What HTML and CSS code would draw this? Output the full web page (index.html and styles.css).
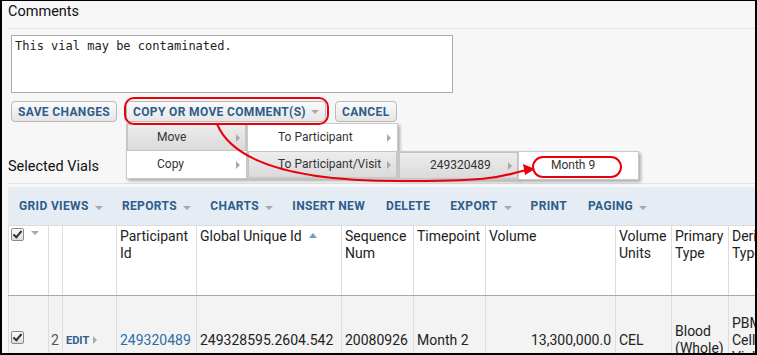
FILE: index.html
```html
<!DOCTYPE html>
<html lang="en">
<head>
    <meta charset="UTF-8">
    <title>Specimen comments</title>
    <link rel="stylesheet" href="styles.css">
</head>
<body>
<div class="frame">
    <div class="page">
        <h2 class="section-title">Comments</h2>
        <textarea class="comment-box">This vial may be contaminated.</textarea>
        <div class="button-row">
            <span class="btn">Save Changes</span>
            <span class="btn">Copy or Move Comment(s) <span class="caret"></span></span>
            <span class="btn">Cancel</span>
        </div>

        <h2 class="section-title vials-title">Selected Vials</h2>

        <div class="grid">
            <div class="toolbar">
                <span class="tb-item has-caret">Grid Views <span class="caret"></span></span>
                <span class="tb-item has-caret">Reports <span class="caret"></span></span>
                <span class="tb-item has-caret">Charts <span class="caret"></span></span>
                <span class="tb-item">Insert New</span>
                <span class="tb-item">Delete</span>
                <span class="tb-item has-caret">Export <span class="caret"></span></span>
                <span class="tb-item">Print</span>
                <span class="tb-item has-caret">Paging <span class="caret"></span></span>
            </div>
            <table class="data">
                <colgroup>
                    <col style="width:40px"><col style="width:14px"><col style="width:54px">
                    <col style="width:80px"><col style="width:145px"><col style="width:72px">
                    <col style="width:72px"><col style="width:130px"><col style="width:56px">
                    <col style="width:57px"><col style="width:52px">
                </colgroup>
                <tr class="head">
                    <th class="sel"><span class="check"></span><span class="caret grey"></span></th>
                    <th></th>
                    <th></th>
                    <th>Participant Id</th>
                    <th>Global Unique Id <span class="sort-up"></span></th>
                    <th>Sequence Num</th>
                    <th>Timepoint</th>
                    <th>Volume</th>
                    <th>Volume Units</th>
                    <th>Primary Type</th>
                    <th>Derivative Type</th>
                </tr>
                <tr class="row">
                    <td class="sel"><span class="check"></span></td>
                    <td class="rownum">2</td>
                    <td><span class="edit">Edit</span> <span class="tri grey"></span></td>
                    <td><a class="link">249320489</a></td>
                    <td>249328595.2604.542</td>
                    <td>20080926</td>
                    <td>Month 2</td>
                    <td class="num">13,300,000.0</td>
                    <td>CEL</td>
                    <td>Blood (Whole)</td>
                    <td>PBMC Cells Viable</td>
                </tr>
            </table>
        </div>
    </div>

    <div class="menu menu-1">
        <div class="menu-item active">Move <span class="tri"></span></div>
        <div class="menu-item">Copy <span class="tri"></span></div>
    </div>
    <div class="menu menu-2">
        <div class="menu-item">To Participant <span class="tri"></span></div>
        <div class="menu-item active">To Participant/Visit <span class="tri"></span></div>
    </div>
    <div class="menu menu-3">
        <div class="menu-item active">249320489 <span class="tri"></span></div>
    </div>
    <div class="menu menu-4">
        <div class="menu-item">Month 9</div>
    </div>

    <svg class="marks" width="757" height="355" viewBox="0 0 757 355">
        <rect x="125" y="98" width="203" height="26" rx="9" fill="none" stroke="#e8000b" stroke-width="2"/>
        <rect x="533" y="157" width="88" height="20" rx="10" fill="none" stroke="#e8000b" stroke-width="2"/>
        <path d="M217 124 C 232 160 290 181 400 181 S 500 175 527 170" fill="none" stroke="#e8000b" stroke-width="2"/>
        <polygon points="535,169 523,164 525,175" fill="#e8000b"/>
    </svg>
</div>
</body>
</html>
```

FILE: styles.css
```css
body {
    margin: 0;
    font-family: Roboto, "Liberation Sans", Arial, sans-serif;
    color: #222;
}

.frame {
    position: relative;
    width: 757px;
    height: 355px;
    box-sizing: border-box;
    border: 2px solid #000;
    border-top-width: 1px;
    background-color: #f7f7f7;
    overflow: hidden;
}

.page {
    padding-left: 6px;
}

.section-title {
    margin: 0;
    padding: 2px 0 7px;
    font-size: 14.5px;
    font-weight: normal;
    line-height: 18px;
    color: #111;
    border-bottom: 1px solid #e2e2e2;
}

.vials-title {
    margin-top: 34px;
}

.comment-box {
    display: block;
    box-sizing: border-box;
    width: 442px;
    height: 58px;
    margin: 6px 0 0 3px;
    padding: 3px 3px;
    font-family: "DejaVu Sans Mono", monospace;
    font-size: 12px;
    line-height: 15px;
    color: #222;
    background: #fff;
    border: 1px solid #a9a9a9;
    resize: none;
}

.button-row {
    display: flex;
    gap: 9px;
    margin: 8px 0 0 3px;
}

.btn {
    display: inline-flex;
    align-items: center;
    height: 21px;
    box-sizing: border-box;
    padding: 0 6px;
    font-size: 12px;
    font-weight: bold;
    letter-spacing: 0.35px;
    text-transform: uppercase;
    color: #2e5d8c;
    background: linear-gradient(#fafafa, #e6e6e6);
    border: 1px solid #b9b9b9;
    border-radius: 4px;
}

.caret {
    display: inline-block;
    width: 0;
    height: 0;
    margin-left: 5px;
    border-left: 4px solid transparent;
    border-right: 4px solid transparent;
    border-top: 4px solid #a8a8a8;
}

.tri {
    display: inline-block;
    width: 0;
    height: 0;
    border-top: 4px solid transparent;
    border-bottom: 4px solid transparent;
    border-left: 4px solid #aaa;
}

.grid {
    margin-top: 3px;
}

.toolbar {
    display: flex;
    align-items: center;
    gap: 20px;
    height: 38px;
    padding-left: 11px;
    background-color: #e5ecf3;
}

.tb-item {
    font-size: 12px;
    font-weight: bold;
    letter-spacing: 0.35px;
    text-transform: uppercase;
    color: #2e5d8c;
    white-space: nowrap;
}

.tb-item .caret {
    margin-left: 3px;
}

.tb-item.has-caret {
    margin-right: -1px;
}

.tb-item:nth-child(4),
.tb-item:nth-child(7) {
    margin-right: 1px;
}

.data {
    table-layout: fixed;
    width: 772px;
    border-collapse: collapse;
    font-size: 14px;
}

.data th,
.data td {
    border: 1px solid #ddd;
    padding: 0 2px 0 3px;
    line-height: 17px;
    font-weight: normal;
    overflow: hidden;
}

.head th {
    height: 70px;
    box-sizing: border-box;
    padding-top: 2px;
    vertical-align: top;
    text-align: left;
    background-color: #fff;
    border-bottom: 1px solid #a8a8a8;
}

.row td {
    height: 88px;
    vertical-align: middle;
    background-color: #f3f3f3;
}

.data .sel {
    padding-left: 2px;
}

.head .sel .check {
    vertical-align: 1px;
}

.head .sel .caret {
    margin-left: 7px;
    vertical-align: 7px;
}

.check {
    display: inline-block;
    width: 13px;
    height: 13px;
    box-sizing: border-box;
    border: 1px solid #8a8a8a;
    border-radius: 2px;
    background: linear-gradient(#fdfdfd, #dcdcdc);
    position: relative;
    vertical-align: -1px;
}

.check::after {
    content: "";
    position: absolute;
    left: 3px;
    top: 0px;
    width: 3px;
    height: 7px;
    border: solid #333;
    border-width: 0 2px 2px 0;
    transform: rotate(40deg);
}

.row .sel .check {
    vertical-align: 2px;
}

.data .num {
    text-align: right;
    padding-right: 4px;
}

.data .rownum {
    padding: 0 0 0 2px;
    color: #555;
}

.edit {
    font-size: 11px;
    font-weight: bold;
    text-transform: uppercase;
    color: #2e5d8c;
}

.link {
    color: #2c6ea8;
}

.sort-up {
    display: inline-block;
    width: 0;
    height: 0;
    margin-left: 4px;
    vertical-align: 3px;
    border-left: 4px solid transparent;
    border-right: 4px solid transparent;
    border-bottom: 5px solid #7a9cc2;
}

/* popup menus */
.menu {
    position: absolute;
    box-sizing: border-box;
    background-color: #fff;
    border: 1px solid #c9c9c9;
    box-shadow: 2px 2px 3px rgba(0, 0, 0, 0.3);
    font-size: 12px;
    color: #333;
}

.menu-item {
    position: relative;
    box-sizing: border-box;
    height: 27px;
    line-height: 25px;
    border: 1px solid transparent;
    white-space: nowrap;
}

.menu-item .tri {
    position: absolute;
    right: 5px;
    top: 9px;
}

.menu-item.active {
    background: linear-gradient(#ededed, #dadada);
    border-color: #c4c4c4;
}

.menu-1 {
    left: 124px;
    top: 122px;
    width: 121px;
}

.menu-1 .menu-item {
    padding-left: 29px;
}

.menu-2 {
    left: 245px;
    top: 122px;
    width: 151px;
}

.menu-2 .menu-item {
    padding-left: 29px;
}

.menu-3 {
    left: 396px;
    top: 150px;
    width: 121px;
}

.menu-3 .menu-item {
    padding-left: 30px;
}

.menu-4 {
    left: 516px;
    top: 150px;
    width: 121px;
}

.menu-4 .menu-item {
    padding-left: 31px;
}

.marks {
    position: absolute;
    left: -2px;
    top: -1px;
    pointer-events: none;
}
```
